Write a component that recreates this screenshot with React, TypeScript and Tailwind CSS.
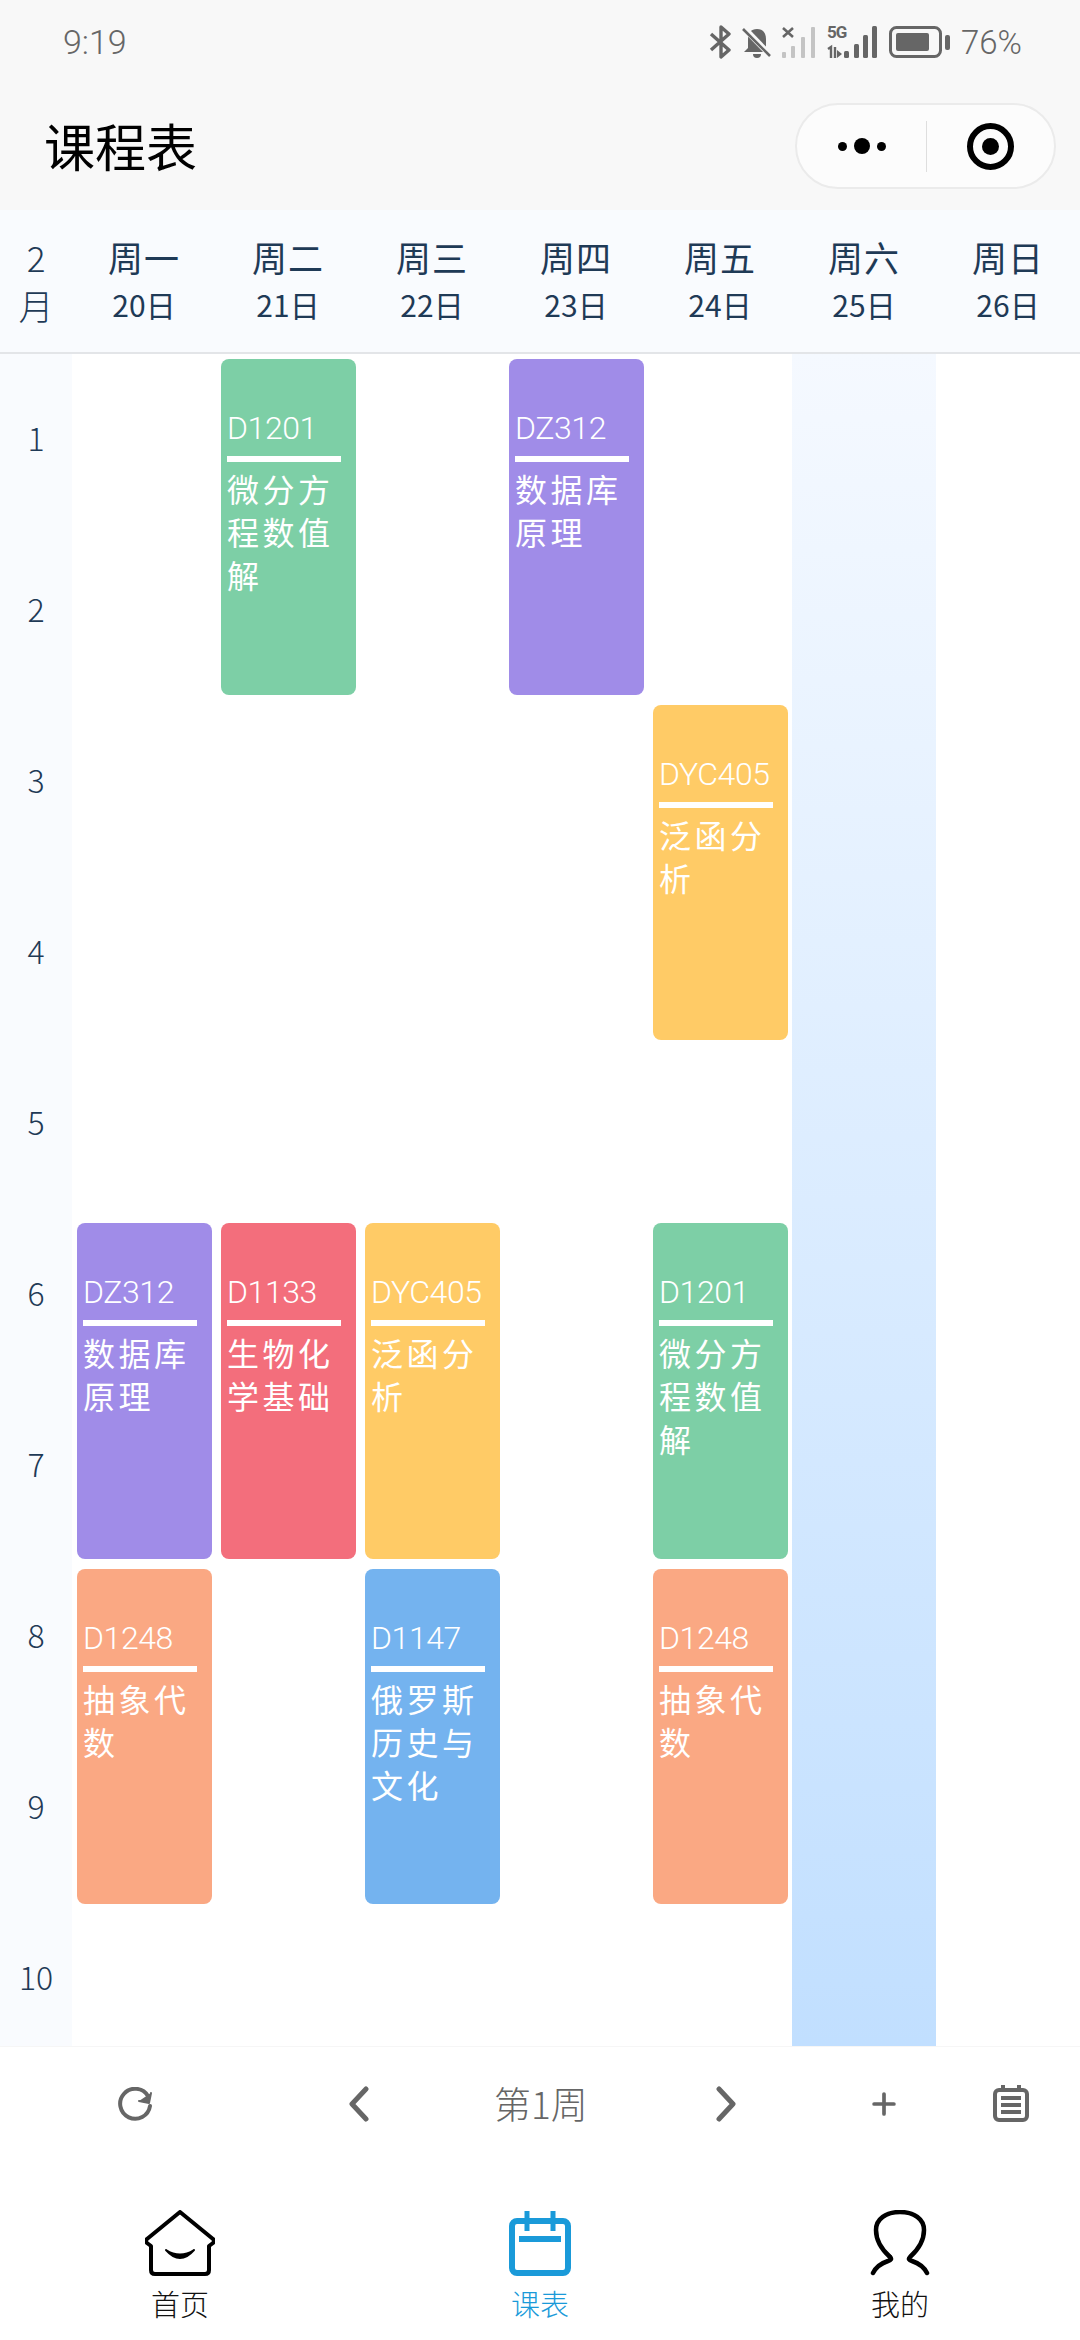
import { Plus } from "lucide-react"

const cjk = { fontFamily: '"Noto Sans CJK SC", sans-serif' }

const days = [
  ["周一", "20日"],
  ["周二", "21日"],
  ["周三", "22日"],
  ["周四", "23日"],
  ["周五", "24日"],
  ["周六", "25日"],
  ["周日", "26日"],
]

const GREEN = "bg-[#7dcfa6]"
const PURPLE = "bg-[#a08ce8]"
const RED = "bg-[#f36e7c]"
const YELLOW = "bg-[#ffcb66]"
const ORANGE = "bg-[#faa883]"
const BLUE = "bg-[#74b3ef]"

// col / row start classes are written out so tailwind picks them up
const courses = [
  { pos: "col-start-2 row-start-1", color: GREEN, code: "D1201", name: "微分方程数值解" },
  { pos: "col-start-4 row-start-1", color: PURPLE, code: "DZ312", name: "数据库原理" },
  { pos: "col-start-5 row-start-3", color: YELLOW, code: "DYC405", name: "泛函分析" },
  { pos: "col-start-1 row-start-6", color: PURPLE, code: "DZ312", name: "数据库原理" },
  { pos: "col-start-2 row-start-6", color: RED, code: "D1133", name: "生物化学基础" },
  { pos: "col-start-3 row-start-6", color: YELLOW, code: "DYC405", name: "泛函分析" },
  { pos: "col-start-5 row-start-6", color: GREEN, code: "D1201", name: "微分方程数值解" },
  { pos: "col-start-1 row-start-8", color: ORANGE, code: "D1248", name: "抽象代数" },
  { pos: "col-start-3 row-start-8", color: BLUE, code: "D1147", name: "俄罗斯历史与文化" },
  { pos: "col-start-5 row-start-8", color: ORANGE, code: "D1248", name: "抽象代数" },
]

function StatusIcons() {
  return (
    <div className="flex items-center">
      {/* bluetooth */}
      <svg width="22" height="34" viewBox="0 0 22 34" fill="none" stroke="#666" strokeWidth="3.4">
        <path d="M2 9l18 16-8 7V2l8 7L2 25" strokeLinejoin="round" />
      </svg>
      {/* muted bell */}
      <svg width="30" height="32" viewBox="0 0 30 32" className="ml-[11px]">
        <path d="M15 3c6 0 9 4 9 10v9l4 4H2l4-4V13c0-6 3-10 9-10z" fill="#666" />
        <path d="M11 28h8a4 4 0 0 1-8 0z" fill="#666" />
        <path d="M1 1l27 28" stroke="#f8f8f8" strokeWidth="6" />
        <path d="M1 3l27 27" stroke="#666" strokeWidth="2.6" />
      </svg>
      {/* empty sim signal */}
      <svg width="34" height="32" viewBox="0 0 34 32" className="ml-[10px]">
        <path d="M1 2l10 9M11 2L1 11" stroke="#666" strokeWidth="2.6" />
        <rect x="0" y="26" width="4" height="6" rx="1" fill="#c4c4c4" />
        <rect x="9" y="20" width="4" height="12" rx="1" fill="#c4c4c4" />
        <rect x="19" y="11" width="4" height="21" rx="1" fill="#c4c4c4" />
        <rect x="29" y="1" width="4" height="31" rx="1" fill="#c4c4c4" />
      </svg>
      {/* 5G signal */}
      <div className="relative ml-[11px] h-[32px] w-[50px]">
        <span
          className="absolute left-0 top-[-3px] text-[17px] leading-[18px] font-bold text-[#666] tracking-[-1px]"
          style={{ fontFamily: "Roboto, sans-serif" }}
        >
          5G
        </span>
        <svg width="50" height="32" viewBox="0 0 50 32" className="absolute left-0 top-0">
          <path d="M1 23l3-2v11M8 32v-11" stroke="#666" strokeWidth="2.4" fill="none" />
          <path d="M10 24l5 4-5 4z" fill="#666" />
          <rect x="17" y="25" width="5" height="7" rx="1.5" fill="#666" />
          <rect x="27" y="18" width="5" height="14" rx="1.5" fill="#666" />
          <rect x="36" y="9" width="5" height="23" rx="1.5" fill="#666" />
          <rect x="45" y="0" width="5" height="32" rx="1.5" fill="#666" />
        </svg>
      </div>
      {/* battery */}
      <svg width="62" height="32" viewBox="0 0 62 32" className="ml-[12px]">
        <rect x="1.5" y="1.5" width="50" height="29" rx="6" fill="none" stroke="#666" strokeWidth="3" />
        <rect x="7" y="7" width="33" height="18" rx="2" fill="#666" />
        <rect x="56" y="9" width="5" height="15" rx="2" fill="#666" />
      </svg>
      <span className="ml-[10px] text-[33px] leading-none text-[#666]" style={{ fontFamily: "Roboto, sans-serif", fontWeight: 300 }}>
        76%
      </span>
    </div>
  )
}

function Capsule() {
  return (
    <div className="flex h-[86px] w-[261px] items-center rounded-full border-2 border-[#ebebeb] bg-[#fcfcfc]">
      <div className="flex w-[129px] items-center justify-center">
        <span className="h-[9px] w-[9px] rounded-full bg-black" />
        <span className="ml-[7px] h-[16px] w-[16px] rounded-full bg-black" />
        <span className="ml-[7px] h-[9px] w-[9px] rounded-full bg-black" />
      </div>
      <div className="h-[51px] w-px bg-[#dedede]" />
      <div className="flex flex-1 items-center justify-center">
        <div className="flex h-[47px] w-[47px] items-center justify-center rounded-full border-[6px] border-black">
          <div className="h-[17px] w-[17px] rounded-full bg-black" />
        </div>
      </div>
    </div>
  )
}

function CourseCard({ pos, color, code, name }: { pos: string; color: string; code: string; name: string }) {
  return (
    <div className={`${pos} row-span-2 ml-[5px] mr-[4px] mt-[5px] mb-[5px] overflow-hidden rounded-[8px] ${color} pl-[6px] pr-[15px] pt-[47px] text-white`}>
      <div
        className="h-[56px] whitespace-nowrap border-b-[6px] border-white text-[32px] font-light leading-[44px] tracking-[-0.4px]"
        style={{ fontFamily: "Roboto, sans-serif" }}
      >
        {code}
      </div>
      <div className="mt-[5px] w-[122px] text-[32px] leading-[43px] tracking-[3.5px]" style={cjk}>
        {name}
      </div>
    </div>
  )
}

export default function App() {
  return (
    <div className="flex h-[2340px] w-[1080px] flex-col overflow-hidden bg-white" style={cjk}>
      {/* Top bar */}
      <header className="h-[210px] bg-[#f8f8f8]">
        <div className="flex h-[84px] items-center justify-between pl-[63px] pr-[58px]">
          <span className="text-[34px] leading-none text-[#666]" style={{ fontFamily: "Roboto, sans-serif", fontWeight: 300 }}>
            9:19
          </span>
          <StatusIcons />
        </div>
        <div className="flex h-[126px] items-start justify-between pl-[44px] pr-[24px] pt-[19px]">
          <h1 className="-mt-[1px] text-[51px] font-normal leading-[86px] text-black">课程表</h1>
          <Capsule />
        </div>
      </header>

      {/* Week header */}
      <div className="flex h-[144px] border-b-2 border-[#e3e5e8] bg-[#f9fbfe] text-[#1f3a56]">
        <div className="flex w-[72px] flex-col items-center pt-[23px] text-[35px] font-light leading-[48px]">
          <span>2</span>
          <span>月</span>
        </div>
        {days.map(([week, date]) => (
          <div key={week} className="flex w-[144px] flex-col items-center pt-[23px]">
            <span className="text-[35px] leading-[48px] tracking-[1px]">{week}</span>
            <span className="text-[30px] leading-[46px]">{date}</span>
          </div>
        ))}
      </div>

      {/* Timetable */}
      <div className="flex h-[1692px] overflow-hidden">
        <div className="w-[72px] shrink-0 bg-[#f9fbfe]">
          {[1, 2, 3, 4, 5, 6, 7, 8, 9, 10].map((n) => (
            <div key={n} className="flex h-[171px] items-center justify-center pb-[6px] text-[32px] font-light text-[#1f3a56]">
              {n}
            </div>
          ))}
        </div>
        <div className="relative h-[1728px] flex-1">
          <div className="absolute left-[720px] top-0 h-[1692px] w-[144px] bg-gradient-to-b from-[#f5f9ff] to-[#c1dfff]" />
          <div className="relative grid h-full grid-cols-[repeat(7,144px)] grid-rows-[repeat(10,172.8px)]">
            {courses.map((c) => (
              <CourseCard key={c.pos} {...c} />
            ))}
          </div>
        </div>
      </div>

      {/* Week toolbar */}
      <div className="flex h-[114px] items-center border-t border-[#f6f6f6] text-[#666]">
        <div className="flex w-[270px] justify-center">
          <svg width="36" height="34" viewBox="0 0 36 34" fill="none" stroke="#666" strokeWidth="4" strokeLinecap="round">
            <path d="M31 9A15 15 0 1 0 33 19" />
            <path d="M22 14l10 2 2-10" fill="#666" strokeWidth="2" strokeLinejoin="round" />
          </svg>
        </div>
        <div className="flex w-[540px] items-center">
          <svg width="22" height="36" viewBox="0 0 22 36" fill="none" stroke="#666" strokeWidth="5" strokeLinecap="round" strokeLinejoin="round" className="ml-[78px]">
            <path d="M18 3L4 18l14 15" />
          </svg>
          <span className="ml-[124px] w-[93px] whitespace-nowrap text-[37px] font-light leading-none">第1周</span>
          <svg width="22" height="36" viewBox="0 0 22 36" fill="none" stroke="#666" strokeWidth="5" strokeLinecap="round" strokeLinejoin="round" className="ml-[128px]">
            <path d="M4 3l14 15L4 33" />
          </svg>
        </div>
        <Plus size={34} strokeWidth={2.6} className="ml-[57px] text-[#666]" />
        <svg width="36" height="37" viewBox="0 0 36 37" className="ml-[92px]" fill="none" stroke="#666">
          <rect x="2" y="5" width="32" height="30" rx="4" strokeWidth="4" />
          <path d="M10 0v6M26 0v6" strokeWidth="4" />
          <path d="M8 13h20M8 20h20M8 27h20" strokeWidth="4" />
        </svg>
      </div>

      {/* Tab bar */}
      <nav className="grid flex-1 grid-cols-3 pt-[50px]">
        <div className="flex flex-col items-center">
          <svg width="70" height="66" viewBox="0 0 70 66" fill="none" stroke="#000" strokeWidth="4" strokeLinejoin="round">
            <path d="M35 2L68 29c1 1 1 3 0 4l-4 3v24c0 3-2 4-4 4H10c-2 0-4-1-4-4V36l-4-3c-1-1-1-3 0-4z" />
            <path d="M21 40Q35 56 49 40Q35 49 21 40z" fill="#000" strokeWidth="2" />
          </svg>
          <span className="mt-[10px] text-[29px] font-light leading-[34px] text-[#111]">首页</span>
        </div>
        <div className="flex flex-col items-center">
          <svg width="62" height="66" viewBox="0 0 62 66" fill="none" stroke="#1a9ad9" strokeWidth="6">
            <rect x="3" y="11" width="56" height="52" rx="5" />
            <path d="M18 1v20M44 1v20" strokeWidth="5" />
            <path d="M10 29h42" />
          </svg>
          <span className="mt-[10px] text-[29px] font-light leading-[34px] text-[#1a9ad9]">课表</span>
        </div>
        <div className="flex flex-col items-center">
          <svg width="60" height="66" viewBox="0 0 60 66" fill="none" stroke="#000" strokeWidth="4.5" strokeLinecap="round">
            <path d="M20 47C10 38 6 30 6 20 6 9 16 2 30 2s24 7 24 18c0 10-4 18-14 27-2 2-1 3 2 4 6 2 12 6 15 12" />
            <path d="M20 47c2 2 1 3-2 4-6 2-12 6-15 12" />
          </svg>
          <span className="mt-[10px] text-[29px] font-light leading-[34px] text-[#111]">我的</span>
        </div>
      </nav>
    </div>
  )
}
